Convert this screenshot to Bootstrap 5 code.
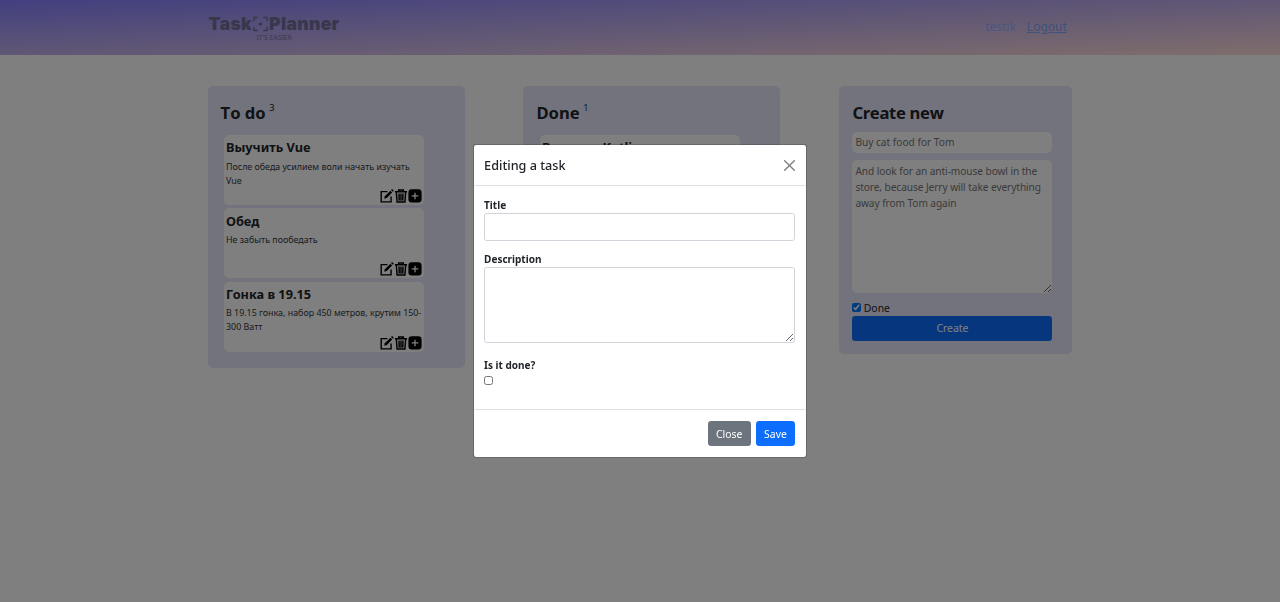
<!DOCTYPE html>
<html lang="en">
<head>
<meta charset="utf-8">
<meta name="viewport" content="width=device-width, initial-scale=1">
<title>Task Planner</title>
<link href="https://cdn.jsdelivr.net/npm/bootstrap@5.3.0/dist/css/bootstrap.min.css" rel="stylesheet">
<script src="https://cdn.jsdelivr.net/npm/bootstrap@5.3.0/dist/js/bootstrap.bundle.min.js" defer></script>
<style>
html{font-size:10.667px}
body{font-family:"Noto Sans","Open Sans",sans-serif;overflow:hidden}
.page-wrap{width:864.8px}
.top-bar{height:54.6px;background:linear-gradient(to bottom right,#8380ff,#ffdcd8)}
.brand-box{margin-left:1px;padding-top:2.5px}
.brand-name{font-family:"Inter",sans-serif;font-weight:900;font-size:17.5px;line-height:18px;color:#706f99;letter-spacing:.35px}
.brand-name svg{margin:0 1px}
.brand-sub{font-size:6.8px;line-height:9px;color:#77739c}
.top-links{font-size:12px;color:#8cb0ff;gap:11px;margin-right:5.6px}
.top-links a{color:#7ca4f4}
.board{margin-top:31.2px}
.panel{background:#e6e6fa;border-radius:5px;padding:15.2px 13px}
.panel-wide{width:257px;height:282.5px}
.panel-form{width:233px;height:268px}
.panel h2{font-size:16.6px;line-height:23px;font-weight:700;margin:0 0 .8px;font-kerning:none;letter-spacing:-.04px}
.panel-form h2{letter-spacing:-.3px}
.count{font-size:9.8px;line-height:13px;color:#212529;margin-left:3.4px}
.count-done{color:#1c4a7c}
.task-list{padding:10.2px 0 0 3.4px;display:grid;gap:3.4px}
.task{width:200px;height:70px;border-radius:5px;background:#fff;padding:3.3px 2px 2px}
.task h3{font-size:12.75px;line-height:19px;font-weight:700;margin:0 0 2.4px}
.task p{font-size:8.9px;line-height:14px;margin:0;color:#33373b}
.acts svg{width:14px;height:13.9px;display:block}
.plain{border:0;border-radius:5px;padding:3px;font-size:10.15px;width:200px;display:block;line-height:16px;background:#fff}
.plain::placeholder{color:#757575;opacity:1}
input.plain{height:21px;margin:7.8px 0 7px;padding:2px 3px}
textarea.plain{height:133px;padding-top:3.2px;letter-spacing:-.07px}
.tick{width:9px;height:9px;margin:0;display:block}
.tick-row{font-size:10.4px;line-height:16px;margin-top:7px}
.tick-row .tick{margin-right:2.4px}
.btn{font-size:10.4px;line-height:16px;padding:3.7px 7.3px;border-radius:2.67px}
.btn-create{width:200px}
.modal{--bs-modal-width:333.4px;--bs-modal-border-radius:3.2px;--bs-modal-inner-border-radius:2.2px}
.modal-header{height:41.4px;padding-left:9.8px}
.modal-title{font-size:12.65px;line-height:20px}
.modal-body{height:223px;padding:10.6px 10.4px 0 9.8px}
.lbl{font-size:10px;line-height:16px;font-weight:700;display:block}
.lbl-check{padding-top:3.4px}
.modal .form-control{border-radius:2.67px;border-color:#ced4da;height:28px}
.modal input.form-control{margin-bottom:10px}
.modal textarea.form-control{height:76px}
.modal .tick{margin-top:3px}
.modal-footer{padding:8px}
.modal-footer>.btn{margin:2.6px}
</style>
</head>
<body class="modal-open">
<svg class="d-none">
  <symbol id="i-edit" viewBox="0 0 16 16"><path fill="none" stroke="#000" stroke-width="1.6" d="M8.500 3H1.300v11.800h11.400V8.500"/><path d="M4.800 11.300l.7-3L11.900 1.900l2.100 2.100L7.700 10.400z"/><path d="M12.600 1.200l.9-.9q.4-.3.800 0l1.300 1.300q.3.400 0 .8l-.9.900z"/></symbol>
  <symbol id="i-trash" viewBox="0 0 16 16"><path fill="none" stroke="#000" stroke-width="1.700" d="M1 3.200h14M5.300 3V1.200h5.400V3M2.600 3.500l.9 11.600h9l.9-11.600M5.700 5.200l.3 8.200M8 5.200v8.200M10.300 5.200l-.3 8.200"/></symbol>
  <symbol id="i-plus" viewBox="0 0 16 16"><rect x=".4" y=".4" width="15.200" height="15.200" rx="3.800"/><path stroke="#fff" stroke-width="1.500" d="M8 4.200v7.600M4.200 8h7.600"/></symbol>
</svg>
<header class="top-bar">
  <div class="page-wrap mx-auto h-100 d-flex justify-content-between align-items-center">
    <div class="brand-box text-center">
      <div class="brand-name d-flex align-items-center">Task<svg width="15" height="16" viewBox="0 0 16 16" fill="none" stroke="currentColor" stroke-width="1.5"><path d="M1 5V1h4M11 1h4v4M15 11v4h-4M5 15H1v-4"/><path d="M8 6v4M6 8h4"/></svg>Planner</div>
      <div class="brand-sub">IT'S EASIER</div>
    </div>
    <div class="top-links d-flex"><span>testik</span><a href="#">Logout</a></div>
  </div>
</header>
<main class="board page-wrap mx-auto d-flex justify-content-between align-items-start">
  <section class="panel panel-wide">
    <div class="d-flex"><h2>To do</h2><span class="count">3</span></div>
    <div class="task-list">
      <article class="task d-flex flex-column"><h3>Выучить Vue</h3><p>После обеда усилием воли начать изучать Vue</p><div class="acts d-flex mt-auto justify-content-end"><svg><use href="#i-edit"/></svg><svg><use href="#i-trash"/></svg><svg><use href="#i-plus"/></svg></div></article>
      <article class="task d-flex flex-column"><h3>Обед</h3><p>Не забыть пообедать</p><div class="acts d-flex mt-auto justify-content-end"><svg><use href="#i-edit"/></svg><svg><use href="#i-trash"/></svg><svg><use href="#i-plus"/></svg></div></article>
      <article class="task d-flex flex-column"><h3>Гонка в 19.15</h3><p>В 19.15 гонка, набор 450 метров, крутим 150-300 Ватт</p><div class="acts d-flex mt-auto justify-content-end"><svg><use href="#i-edit"/></svg><svg><use href="#i-trash"/></svg><svg><use href="#i-plus"/></svg></div></article>
    </div>
  </section>
  <section class="panel panel-wide">
    <div class="d-flex"><h2>Done</h2><span class="count count-done">1</span></div>
    <div class="task-list">
      <article class="task"><h3>Выучить Kotlin</h3></article>
    </div>
  </section>
  <section class="panel panel-form">
    <h2>Create new</h2>
    <input class="plain" placeholder="Buy cat food for Tom">
    <textarea class="plain" placeholder="And look for an anti-mouse bowl in the store, because Jerry will take everything away from Tom again"></textarea>
    <label class="tick-row d-flex align-items-center"><input class="tick" type="checkbox" checked>Done</label>
    <button class="btn btn-primary btn-create" type="button">Create</button>
  </section>
</main>
<div class="modal d-block" tabindex="-1">
  <div class="modal-dialog modal-dialog-centered">
    <div class="modal-content">
      <div class="modal-header"><h1 class="modal-title">Editing a task</h1><button class="btn-close" type="button" aria-label="Close"></button></div>
      <div class="modal-body">
        <label class="lbl">Title</label>
        <input class="form-control">
        <label class="lbl">Description</label>
        <textarea class="form-control mb-3"></textarea>
        <label class="lbl lbl-check">Is it done?</label>
        <input class="tick" type="checkbox">
      </div>
      <div class="modal-footer"><button class="btn btn-secondary" type="button">Close</button><button class="btn btn-primary" type="button">Save</button></div>
    </div>
  </div>
</div>
<div class="modal-backdrop show"></div>
</body>
</html>
